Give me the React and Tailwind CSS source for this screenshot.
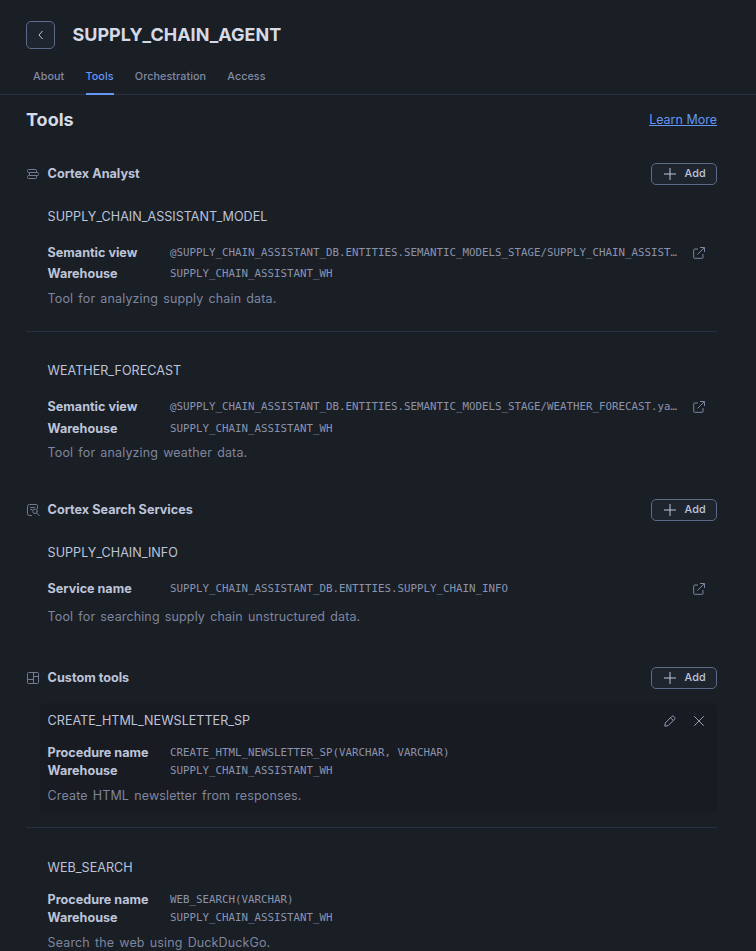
import React from 'react';
import clsx from 'clsx';

const tabs = ['About', 'Tools', 'Orchestration', 'Access'];

const AnalystIcon = () => (
  <svg className="w-[14px] h-[14px]" viewBox="0 0 14 14" fill="none" stroke="currentColor" strokeLinejoin="round">
    <path d="M10.5 5.5v-2a1 1 0 0 0-1-1h-7a1 1 0 0 0-1 1v1a1 1 0 0 0 1 1h9a1 1 0 0 1 1 1v1a1 1 0 0 1-1 1H3.5" />
    <path d="M3.5 5.5v3h-1a1 1 0 0 0-1 1v1a1 1 0 0 0 1 1h7a1 1 0 0 0 1-1v-2" />
  </svg>
);

const SearchServiceIcon = () => (
  <svg className="w-[14px] h-[14px]" viewBox="0 0 14 14" fill="none" stroke="currentColor" strokeLinecap="round">
    <path d="M5.5 12.5h-2a2 2 0 0 1-2-2v-7a2 2 0 0 1 2-2h7a1 1 0 0 1 1 1v3" />
    <path d="M4.5 4.5h4M4.5 6.5h1.5" />
    <circle cx="9" cy="8.3" r="2.3" />
    <path d="M10.7 10l2.6 2.6" />
  </svg>
);

const CustomIcon = () => (
  <svg className="w-[14px] h-[14px]" viewBox="0 0 14 14" fill="none" stroke="currentColor">
    <rect x="1.5" y="1.5" width="11" height="11" rx="1" />
    <path d="M7.5 1.5v11M1.5 8.5h6M7.5 5.5h5" />
  </svg>
);

const OpenIcon = () => (
  <svg className="w-[14px] h-[14px]" viewBox="0 0 14 14" fill="none" stroke="currentColor">
    <path d="M6 3H2.5a.8.8 0 0 0-.8.8v7.7a.8.8 0 0 0 .8.8h7.7a.8.8 0 0 0 .8-.8V8" />
    <path d="M8 1.5h4.5V6M12.3 1.7L5.5 8.5" />
  </svg>
);

const EditIcon = () => (
  <svg className="w-[14px] h-[14px]" viewBox="0 0 14 14" fill="none" stroke="currentColor" strokeLinejoin="round">
    <path d="M1.8 12.2l.6-3.4 6.4-6.4a1.3 1.3 0 0 1 1.9 0l.9.9a1.3 1.3 0 0 1 0 1.9l-6.4 6.4z" />
    <path d="M7.5 3.7l2.8 2.8" />
  </svg>
);

const CloseIcon = () => (
  <svg className="w-[14px] h-[14px]" viewBox="0 0 14 14" fill="none" stroke="currentColor">
    <path d="M2.2 2.2l9.6 9.6M11.8 2.2L2.2 11.8" />
  </svg>
);

const SectionHeader = ({ icon, title, className }) => (
  <div className={clsx('flex items-center h-[22px]', className)}>
    <span className="w-[21.6px] text-[#737a94]">{icon}</span>
    <h3 className="flex-1 text-[12.65px] font-bold text-[#bdc4d9]">{title}</h3>
    <button className="flex items-center w-[66px] h-[22px] pl-3 rounded-[5px] border border-[#5d6a8a] bg-[#1e252f] text-[10.8px] font-medium tracking-[0.1px] text-[#bdc4d9]">
      <svg className="w-3 h-3 mr-[8.5px]" viewBox="0 0 12 12" fill="none" stroke="currentColor">
        <path d="M6 0v12M0 6h12" />
      </svg>
      <span className="pt-px">Add</span>
    </button>
  </div>
);

const Field = ({ label, value, link, className }) => (
  <div className={clsx('flex items-center', className)}>
    <span className="w-[122.4px] shrink-0 text-[12.6px] font-bold text-[#bdc4d9]">{label}</span>
    <span className="w-[508px] whitespace-nowrap font-['DejaVu_Sans_Mono',monospace] text-[10.8px] text-[#8a93ad]">{value}</span>
    {link && (
      <button className="ml-[14px] text-[#7e869f]">
        <OpenIcon />
      </button>
    )}
  </div>
);

const ToolTitle = ({ children, className }) => (
  <h4 className={clsx('h-5 leading-[22px] text-[12.6px] text-[#bdc4d9]', className)}>{children}</h4>
);

const Description = ({ children, className }) => (
  <p className={clsx('h-5 leading-5 text-[12.5px] tracking-[0.13px] [word-spacing:1.5px] text-[#7e869f]', className)}>{children}</p>
);

const App = () => {
  return (
    <div className="h-[951px] overflow-hidden bg-[#1a1e25] font-['Inter',sans-serif]">
      <header className="border-b border-[#2b3145]">
        <div className="flex items-center pt-[21px] pl-[26px]">
          <button className="flex items-center justify-center w-[29px] h-7 rounded-[5px] border border-[#5d6a8a] bg-[#1e252f] text-[#bdc4d9]">
            <svg className="w-[10px] h-[10px]" viewBox="0 0 10 10" fill="none" stroke="currentColor">
              <path d="M6.5 1L3 5l3.5 4" />
            </svg>
          </button>
          <h1 className="ml-[17.5px] text-[18px] leading-7 font-bold text-[#d5dae6]">SUPPLY_CHAIN_AGENT</h1>
        </div>
        <nav className="flex gap-[21.2px] mt-[15px] pl-[33px]">
          {tabs.map((tab) => (
            <button
              key={tab}
              className={clsx(
                '-mb-px h-[31px] pb-[3px] border-b-2 text-[10.8px] font-medium tracking-[0.06px]',
                tab === 'Tools' ? 'border-[#6396f5] text-[#6396f5]' : 'border-transparent text-[#828aa4]'
              )}
            >
              {tab}
            </button>
          ))}
        </nav>
      </header>

      <main className="pl-[26px] pr-[39px]">
        <div className="flex items-center justify-between h-7 mt-[11px]">
          <h2 className="pb-0.5 text-[18px] font-bold text-[#d5dae6]">Tools</h2>
          <a href="#" className="text-[12.5px] text-[#6396f5] underline">Learn More</a>
        </div>

        <section>
          <SectionHeader icon={<AnalystIcon />} title="Cortex Analyst" className="mt-[29px]" />
          <div className="pl-[21.6px] pt-[21px] pb-[22px] border-b border-[#2b3145]">
            <ToolTitle>SUPPLY_CHAIN_ASSISTANT_MODEL</ToolTitle>
            <Field label="Semantic view" value="@SUPPLY_CHAIN_ASSISTANT_DB.ENTITIES.SEMANTIC_MODELS_STAGE/SUPPLY_CHAIN_ASSIST…" link className="mt-[17px] h-5" />
            <Field label="Warehouse" value="SUPPLY_CHAIN_ASSISTANT_WH" className="mt-px h-5" />
            <Description className="mt-[5px]">Tool for analyzing supply chain data.</Description>
          </div>
          <div className="pl-[21.6px] pt-7">
            <ToolTitle>WEATHER_FORECAST</ToolTitle>
            <Field label="Semantic view" value="@SUPPLY_CHAIN_ASSISTANT_DB.ENTITIES.SEMANTIC_MODELS_STAGE/WEATHER_FORECAST.ya…" link className="mt-[17px] h-5" />
            <Field label="Warehouse" value="SUPPLY_CHAIN_ASSISTANT_WH" className="mt-0.5 h-5" />
            <Description className="mt-1">Tool for analyzing weather data.</Description>
          </div>
        </section>

        <section>
          <SectionHeader icon={<SearchServiceIcon />} title="Cortex Search Services" className="mt-9" />
          <div className="pl-[21.6px] pt-[21px]">
            <ToolTitle>SUPPLY_CHAIN_INFO</ToolTitle>
            <Field label="Service name" value="SUPPLY_CHAIN_ASSISTANT_DB.ENTITIES.SUPPLY_CHAIN_INFO" link className="mt-[17px] h-5" />
            <Description className="mt-2">Tool for searching supply chain unstructured data.</Description>
          </div>
        </section>

        <section>
          <SectionHeader icon={<CustomIcon />} title="Custom tools" className="mt-10" />
          <div className="pt-[14px] pb-[14px] border-b border-[#2b3145]">
            <div className="ml-[14px] pl-[7.6px] pt-[7px] pb-[7px] rounded-md bg-[#191b22]">
              <div className="flex items-center pr-[11px] text-[#969eb6]">
                <ToolTitle className="flex-1">CREATE_HTML_NEWSLETTER_SP</ToolTitle>
                <button className="mt-0.5 mr-[15px]"><EditIcon /></button>
                <button className="mt-0.5"><CloseIcon /></button>
              </div>
              <Field label="Procedure name" value="CREATE_HTML_NEWSLETTER_SP(VARCHAR, VARCHAR)" className="mt-[14px] h-[18px]" />
              <Field label="Warehouse" value="SUPPLY_CHAIN_ASSISTANT_WH" className="h-[18px]" />
              <Description className="mt-1.5">Create HTML newsletter from responses.</Description>
            </div>
          </div>
          <div className="pl-[21.6px] pt-[29px]">
            <ToolTitle>WEB_SEARCH</ToolTitle>
            <Field label="Procedure name" value="WEB_SEARCH(VARCHAR)" className="mt-[14px] h-[18px]" />
            <Field label="Warehouse" value="SUPPLY_CHAIN_ASSISTANT_WH" className="h-[18px]" />
            <Description className="mt-1.5">Search the web using DuckDuckGo.</Description>
          </div>
        </section>
      </main>
    </div>
  );
};

export default App;
